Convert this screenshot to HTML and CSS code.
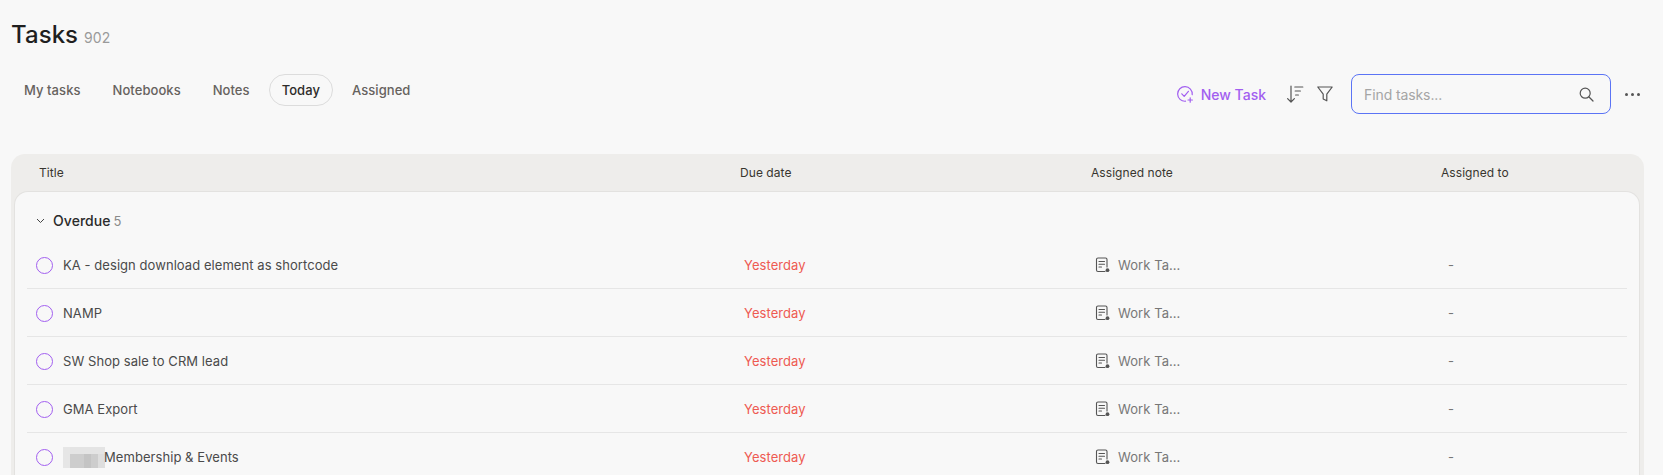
FILE: index.html
```html
<!DOCTYPE html>
<html>

  <head>
    <meta charset="UTF-8">
    <title>Tasks</title>
    <link rel="stylesheet" href="styles.css">
  </head>

  <body>
    <div class="page">
      <div class="pageTitle">
        <h1>Tasks</h1>
        <span class="pageCount">902</span>
      </div>

      <div class="toolbar">
        <div class="tabs">
          <a class="tab">My tasks</a>
          <a class="tab">Notebooks</a>
          <a class="tab">Notes</a>
          <a class="tab active">Today</a>
          <a class="tab">Assigned</a>
        </div>

        <div class="actions">
          <a class="newTask">
            <svg width="18" height="18" viewBox="0 0 18 18" fill="none" stroke="#a25ff0" stroke-width="1.2" stroke-linecap="round" stroke-linejoin="round">
              <path d="M9.5 16.2A7.3 7.3 0 1 1 16.2 9.6"/>
              <path d="M5.8 8.8l2.4 2.5 4.2-5"/>
              <path d="M14.2 12.8v4.4M12 15h4.4"/>
            </svg>
            New Task
          </a>
          <svg class="sortIcon" width="18" height="18" viewBox="0 0 18 18" fill="none" stroke="#555" stroke-width="1.2" stroke-linecap="round" stroke-linejoin="round">
            <path d="M5 1v16M1.6 13.6L5 17l3.4-3.4"/>
            <path d="M8.8 2h8M9.2 6h5.2M9.6 10h2.8"/>
          </svg>
          <svg class="filterIcon" width="16" height="16" viewBox="0 0 16 16" fill="none" stroke="#555" stroke-width="1.2" stroke-linejoin="round">
            <path d="M.8 1h14.4L9.8 8.2v6.6L6.2 13V8.2z"/>
          </svg>
          <div class="search">
            <span class="searchText">Find tasks...</span>
            <svg width="15" height="15" viewBox="0 0 15 15" fill="none" stroke="#555" stroke-width="1.2" stroke-linecap="round">
              <circle cx="6.2" cy="6.2" r="5"/>
              <path d="M10 10l4 4"/>
            </svg>
          </div>
          <div class="more"><i></i><i></i><i></i></div>
        </div>
      </div>

      <div class="table">
        <div class="tableHead">
          <div>Title</div>
          <div>Due date</div>
          <div>Assigned note</div>
          <div>Assigned to</div>
        </div>

        <div class="tableBody">
          <div class="group">
            <svg width="9" height="6" viewBox="0 0 9 6" fill="none" stroke="#444" stroke-width="1">
              <path d="M1 1l3.5 3.5L8 1"/>
            </svg>
            <span class="groupName">Overdue</span>
            <span class="groupCount">5</span>
          </div>

          <div class="row">
            <div class="taskName"><span class="check"></span>KA - design download element as shortcode</div>
            <div class="due">Yesterday</div>
            <div class="note">
              <svg width="15" height="16" viewBox="0 0 15 16" fill="none" stroke="#555" stroke-width="1.1" stroke-linecap="round"><path d="M10 14.5H3A1.5 1.5 0 0 1 1.5 13V2.5A1.5 1.5 0 0 1 3 1h7.5A1.5 1.5 0 0 1 12 2.5V10"/><path d="M4 4.5h5.5M4 7.2h5.5M4 10h2.5"/><circle cx="12.5" cy="13.2" r="1.9" fill="#555" stroke="none"/></svg>
              <span>Work Ta...</span>
            </div>
            <div class="assignee">-</div>
          </div>

          <div class="row">
            <div class="taskName"><span class="check"></span>NAMP</div>
            <div class="due">Yesterday</div>
            <div class="note">
              <svg width="15" height="16" viewBox="0 0 15 16" fill="none" stroke="#555" stroke-width="1.1" stroke-linecap="round"><path d="M10 14.5H3A1.5 1.5 0 0 1 1.5 13V2.5A1.5 1.5 0 0 1 3 1h7.5A1.5 1.5 0 0 1 12 2.5V10"/><path d="M4 4.5h5.5M4 7.2h5.5M4 10h2.5"/><circle cx="12.5" cy="13.2" r="1.9" fill="#555" stroke="none"/></svg>
              <span>Work Ta...</span>
            </div>
            <div class="assignee">-</div>
          </div>

          <div class="row">
            <div class="taskName"><span class="check"></span>SW Shop sale to CRM lead</div>
            <div class="due">Yesterday</div>
            <div class="note">
              <svg width="15" height="16" viewBox="0 0 15 16" fill="none" stroke="#555" stroke-width="1.1" stroke-linecap="round"><path d="M10 14.5H3A1.5 1.5 0 0 1 1.5 13V2.5A1.5 1.5 0 0 1 3 1h7.5A1.5 1.5 0 0 1 12 2.5V10"/><path d="M4 4.5h5.5M4 7.2h5.5M4 10h2.5"/><circle cx="12.5" cy="13.2" r="1.9" fill="#555" stroke="none"/></svg>
              <span>Work Ta...</span>
            </div>
            <div class="assignee">-</div>
          </div>

          <div class="row">
            <div class="taskName"><span class="check"></span>GMA Export</div>
            <div class="due">Yesterday</div>
            <div class="note">
              <svg width="15" height="16" viewBox="0 0 15 16" fill="none" stroke="#555" stroke-width="1.1" stroke-linecap="round"><path d="M10 14.5H3A1.5 1.5 0 0 1 1.5 13V2.5A1.5 1.5 0 0 1 3 1h7.5A1.5 1.5 0 0 1 12 2.5V10"/><path d="M4 4.5h5.5M4 7.2h5.5M4 10h2.5"/><circle cx="12.5" cy="13.2" r="1.9" fill="#555" stroke="none"/></svg>
              <span>Work Ta...</span>
            </div>
            <div class="assignee">-</div>
          </div>

          <div class="row">
            <div class="taskName">
              <span class="check"></span>
              <svg class="blurred" width="42" height="21" viewBox="0 0 6 3" shape-rendering="crispEdges">
                <rect width="6" height="3" fill="#dedede"/>
                <rect x="1" y="1" width="4" height="2" fill="#cdcdcd"/>
                <rect x="3" y="1" width="1" height="2" fill="#c4c4c4"/>
                <rect x="0" y="0" width="1" height="3" fill="#e6e6e6"/>
                <rect x="1" y="0" width="5" height="1" fill="#e4e4e4"/>
              </svg><span class="afterBlur">Membership &amp; Events</span>
            </div>
            <div class="due">Yesterday</div>
            <div class="note">
              <svg width="15" height="16" viewBox="0 0 15 16" fill="none" stroke="#555" stroke-width="1.1" stroke-linecap="round"><path d="M10 14.5H3A1.5 1.5 0 0 1 1.5 13V2.5A1.5 1.5 0 0 1 3 1h7.5A1.5 1.5 0 0 1 12 2.5V10"/><path d="M4 4.5h5.5M4 7.2h5.5M4 10h2.5"/><circle cx="12.5" cy="13.2" r="1.9" fill="#555" stroke="none"/></svg>
              <span>Work Ta...</span>
            </div>
            <div class="assignee">-</div>
          </div>
        </div>
      </div>
    </div>
  </body>

</html>
```

FILE: styles.css
```css
html, body {
  height: 100%;
  margin: 0;
  overflow: hidden;
}

body {
  background: #f8f8f8;
  color: #333;
  font-family: Inter, "Liberation Sans", sans-serif;
  font-size: 13px;
  letter-spacing: .06px;
}

.page {
  padding: 0 19px 0 11px;
}

.pageTitle {
  display: flex;
  align-items: baseline;
  gap: 6px;
  height: 74px;
  padding-top: 21px;
  box-sizing: border-box;
}

.pageTitle h1 {
  margin: 0;
  font-size: 24px;
  font-weight: 500;
  line-height: 28px;
  color: #1f1f1f;
}

.pageCount {
  font-size: 14px;
  color: #9a9a9a;
}

.toolbar {
  display: flex;
  justify-content: space-between;
  align-items: flex-start;
  height: 80px;
}

.tabs {
  display: flex;
  align-items: center;
  margin-left: -1px;
}

.tab {
  height: 30px;
  line-height: 30px;
  padding: 0 13px;
  margin-right: 4px;
  border: 1px solid transparent;
  border-radius: 16px;
  font-weight: 500;
  color: #66625e;
}

.tab.active {
  margin: 0 5px 0 1px;
  padding: 0 12px;
  color: #2e2c2a;
  border-color: #dcdcdc;
}

.actions {
  display: flex;
  align-items: center;
}

.newTask {
  display: flex;
  align-items: center;
  gap: 7px;
  font-size: 14px;
  font-weight: 500;
  letter-spacing: 0;
  color: #a25ff0;
}

.sortIcon {
  margin-left: 20px;
}

.filterIcon {
  margin-left: 13px;
}

.search {
  display: flex;
  justify-content: space-between;
  align-items: center;
  width: 260px;
  height: 40px;
  margin-left: 18px;
  padding: 0 16px 0 12px;
  box-sizing: border-box;
  border: 1px solid #5b74f5;
  border-radius: 8px;
}

.searchText {
  font-size: 14px;
  letter-spacing: -.1px;
  color: #a5a5a5;
}

.more {
  display: flex;
  gap: 3px;
  margin: 0 4px 0 14px;
}

.more i {
  width: 3px;
  height: 3px;
  border-radius: 50%;
  background: #555;
}

.table {
  padding: 0 4px 0 3px;
  background: #eeedeb;
  border-radius: 14px 14px 0 0;
}

.tableHead {
  display: grid;
  grid-template-columns: 701px 351px 350px 1fr;
  align-items: center;
  height: 37px;
  font-size: 12px;
  color: #38352f;
  padding-left: 25px;
}

.tableBody {
  background: #f8f8f8;
  border: 1px solid #e3e2e0;
  border-bottom: 0;
  border-radius: 14px 14px 0 0;
  padding: 0 12px;
  height: 300px;
}

.group {
  display: flex;
  align-items: center;
  height: 49px;
  padding: 8px 0 0 9px;
  box-sizing: border-box;
  font-size: 14px;
}

.groupName {
  margin-left: 8px;
  font-weight: 500;
  color: #2b2b2b;
}

.groupCount {
  margin-left: 3px;
  font-size: 13px;
  color: #8a8a8a;
}

.row {
  display: grid;
  grid-template-columns: 717px 351px 353px 1fr;
  align-items: center;
  height: 48px;
  padding-top: 1px;
  border-bottom: 1px solid #e6e6e6;
  box-sizing: border-box;
}

.taskName {
  display: flex;
  align-items: center;
  padding-left: 9px;
  color: #4a4a4a;
}

.check {
  width: 15px;
  height: 15px;
  margin-right: 10px;
  border: 1.3px solid #a25ff0;
  border-radius: 50%;
}

.blurred {
  flex: none;
}

.afterBlur {
  margin-left: -1px;
}

.due {
  color: #ee5a52;
}

.note {
  display: flex;
  align-items: center;
  gap: 8px;
  color: #777;
}

.assignee {
  color: #777;
}
```
